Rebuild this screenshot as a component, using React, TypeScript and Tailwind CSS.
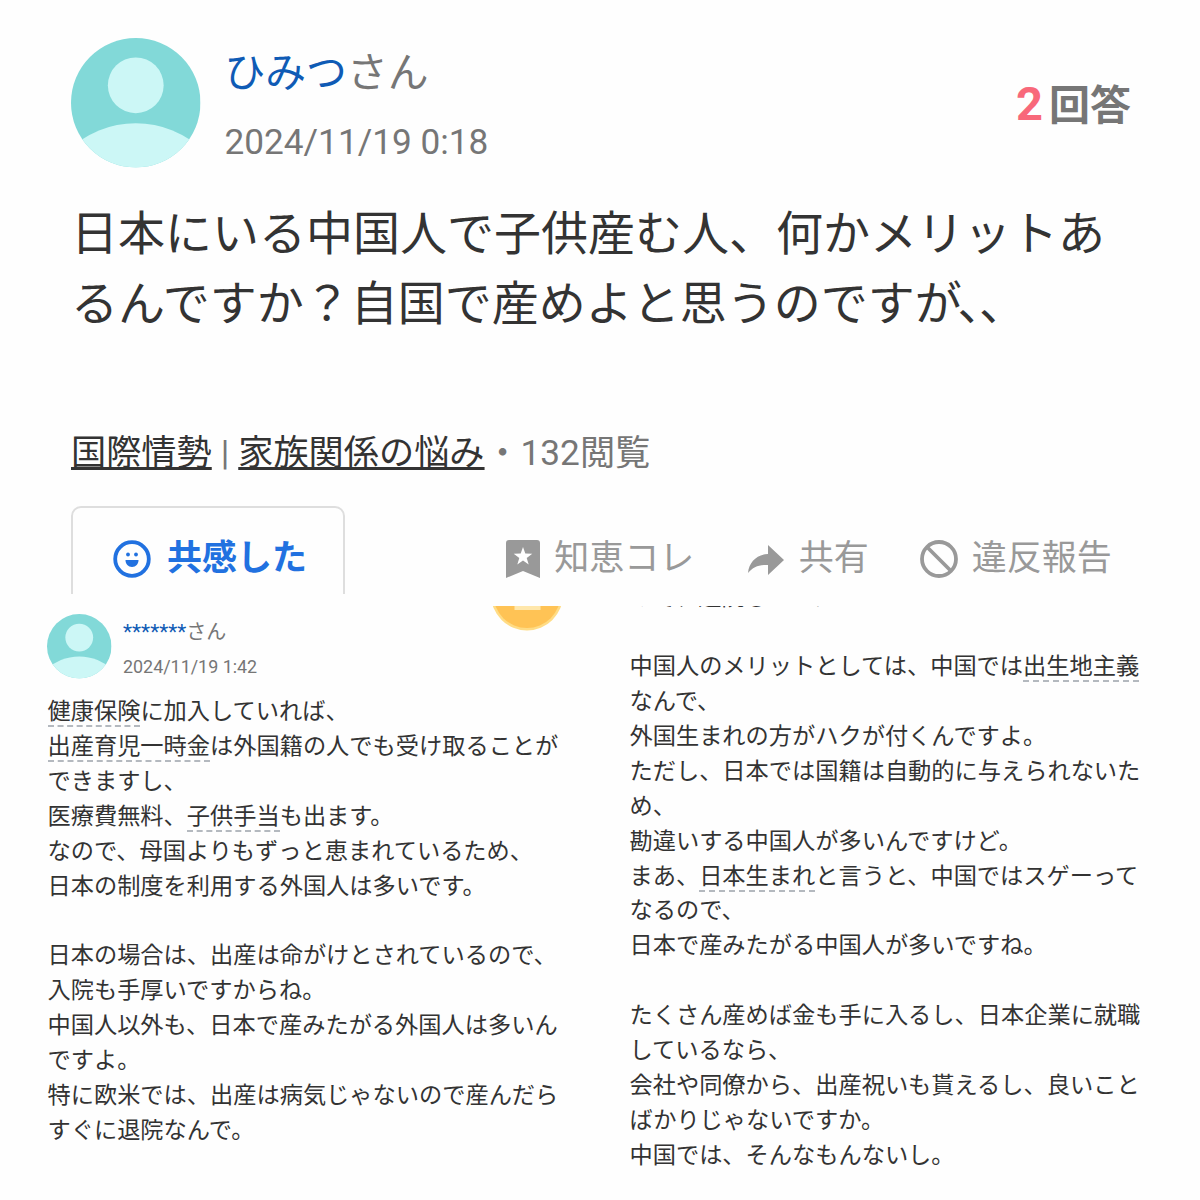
import clsx from "clsx";
import type { ReactNode } from "react";

function Avatar({ className }: { className: string }) {
  return (
    <svg viewBox="0 0 130 130" className={clsx("shrink-0", className)}>
      <defs>
        <clipPath id="avatar">
          <circle cx="65" cy="65" r="65" />
        </clipPath>
      </defs>
      <g clipPath="url(#avatar)">
        <rect width="130" height="130" fill="#82d9d8" />
        <circle cx="65" cy="47.5" r="28" fill="#ccf7f6" />
        <circle cx="65" cy="182" r="96.5" fill="#ccf7f6" />
      </g>
    </svg>
  );
}

function Term({ children }: { children: ReactNode }) {
  return <span className="border-b-2 border-dashed border-[#b4b9bf]">{children}</span>;
}

function Line({ children }: { children?: ReactNode }) {
  return <p className="h-[34.88px] whitespace-nowrap">{children}</p>;
}

export default function App() {
  return (
    <div className="w-[1200px] h-[1200px] overflow-hidden bg-[#fefefe] text-[#333] font-['Roboto','Noto_Sans_CJK_JP',sans-serif]">
      {/* Question */}
      <section className="h-[594px] overflow-hidden pl-[71px] pr-[69px] pt-[38px]">
        <header className="flex h-[130px]">
          <Avatar className="size-[129.5px]" />
          <div className="ml-[24px] grow">
            <div className="pt-[2px] text-[40.8px] leading-[66px] text-[#767676]">
              <a className="text-[#0f5bb5]">ひみつ</a>さん
            </div>
            <div className="mt-[3px] text-[35.2px] leading-[66px] text-[#767676]">2024/11/19 0:18</div>
          </div>
          <div className="flex items-baseline pt-[36px] font-bold leading-[60px]">
            <span className="text-[47px] text-[#f8687a]">2</span>
            <span className="ml-[6px] text-[41px] text-[#767676]">回答</span>
          </div>
        </header>

        <h1 className="mt-[31px] whitespace-nowrap text-[47px] font-normal leading-[70px]">
          <span className="block">日本にいる中国人で子供産む人、何かメリットあ</span>
          <span className="block">るんですか？自国で産めよと思うのですが<span className="-ml-[3px] tracking-[-2px]">､､</span></span>
        </h1>

        <div className="mt-[89px] flex h-[50px] items-center whitespace-nowrap text-[35.2px] leading-[50px] text-[#767676]">
          <a className="text-[#333] underline decoration-[3px] underline-offset-[2px] [text-decoration-skip-ink:none]">国際情勢</a>
          <span className="w-[26.5px] text-center">|</span>
          <a className="text-[#333] underline decoration-[3px] underline-offset-[2px] [text-decoration-skip-ink:none]">家族関係の悩み</a>
          <span className="w-[36px] text-center">・</span>
          <span>132閲覧</span>
        </div>

        <div className="mt-[28px] flex h-[100px] text-[35px] leading-[54px] text-[#999]">
          <button className="flex h-[120px] w-[274px] shrink-0 items-start rounded-t-[10px] border-2 border-[#dedede] pl-[40px] pt-[24px] font-bold text-[#2171e0]">
            <svg viewBox="0 0 38 38" className="mt-[8px] mr-[16px] size-[38px]">
              <circle cx="19" cy="19" r="16.8" fill="none" stroke="currentColor" strokeWidth="3.8" />
              <circle cx="15" cy="14.5" r="1.9" fill="currentColor" />
              <circle cx="23" cy="14.5" r="1.9" fill="currentColor" />
              <path d="M12.5 20h13c0 4-2.700 7-6.500 7s-6.500-3-6.500-7z" fill="currentColor" />
            </svg>
            共感した
          </button>
          <div className="flex items-start pl-[160.5px] pt-[26px] whitespace-nowrap">
            <svg viewBox="0 0 34 38" className="mt-[8px] h-[38px] w-[34px]">
              <path d="M3 0h28a3 3 0 0 1 3 3v35l-17-7-17 7V3a3 3 0 0 1 3-3z" fill="currentColor" />
              <path d="M17 7l2.300 6.600 7 .1-5.600 4.200 2 6.700-5.700-4-5.700 4 2-6.700-5.600-4.200 7-.1z" fill="#fff" />
            </svg>
            <span className="ml-[14.8px]">知恵コレ</span>
            <svg viewBox="0 0 36 30" className="mt-[13px] ml-[54px] h-[30px] w-[36px]">
              <path d="M20 0l16 15-16 15v-10C11 19.500 5 22 0 28 1 17 9 9.500 20 9z" fill="currentColor" />
            </svg>
            <span className="ml-[14.5px]">共有</span>
            <svg viewBox="0 0 38 38" className="mt-[8px] ml-[51px] size-[38px]">
              <circle cx="19" cy="19" r="17" fill="none" stroke="currentColor" strokeWidth="3.800" />
              <path d="M7 7l24 24" stroke="currentColor" strokeWidth="3.800" />
            </svg>
            <span className="ml-[14px]">違反報告</span>
          </div>
        </div>
      </section>

      {/* Answers */}
      <div className="mt-[12px] flex h-[594px] overflow-hidden text-[23.23px] leading-[34.88px]">
        <section className="w-[491px] shrink-0 pl-[47px] pt-[8px]">
          <header className="flex h-[65px]">
            <Avatar className="size-[64.5px]" />
            <div className="ml-[11.5px] text-[#767676]">
              <div className="pt-px text-[20px] leading-[34px]">
                <a className="text-[21px] text-[#0f5bb5]">*******</a>さん
              </div>
              <div className="mt-px text-[17.9px] leading-[34px]">2024/11/19 1:42</div>
            </div>
          </header>
          <div className="mt-[15.2px] ml-[0.5px]">
            <Line><Term>健康保険</Term>に加入していれば、</Line>
            <Line><Term>出産育児一時金</Term>は外国籍の人でも受け取ることが</Line>
            <Line>できますし、</Line>
            <Line>医療費無料、<Term>子供手当</Term>も出ます。</Line>
            <Line>なので、母国よりもずっと恵まれているため、</Line>
            <Line>日本の制度を利用する外国人は多いです。</Line>
            <Line />
            <Line>日本の場合は、出産は命がけとされているので、</Line>
            <Line>入院も手厚いですからね。</Line>
            <Line>中国人以外も、日本で産みたがる外国人は多いん</Line>
            <Line>ですよ。</Line>
            <Line>特に欧米では、出産は病気じゃないので産んだら</Line>
            <Line>すぐに退院なんで。</Line>
          </div>
        </section>

        {/* Bottom of the coin badge, cut by the panel edge */}
        <svg viewBox="0 0 76 30" className="h-[30px] w-[76px] shrink-0">
          <circle cx="36" cy="-11.500" r="36" fill="#ffdc85" />
          <circle cx="36" cy="-11.500" r="33.500" fill="#ffc355" />
          <rect x="23.500" y="0" width="26" height="4" fill="#ffe7ab" />
        </svg>

        <section className="pl-[62.5px]">
          <div className="-mt-[26.5px]">
            <Line>ので、通院していた</Line>
            <Line />
            <Line>中国人のメリットとしては、中国では<Term>出生地主義</Term></Line>
            <Line>なんで、</Line>
            <Line>外国生まれの方がハクが付くんですよ。</Line>
            <Line>ただし、日本では国籍は自動的に与えられないた</Line>
            <Line>め、</Line>
            <Line>勘違いする中国人が多いんですけど。</Line>
            <Line>まあ、<Term>日本生まれ</Term>と言うと、中国ではスゲーって</Line>
            <Line>なるので、</Line>
            <Line>日本で産みたがる中国人が多いですね。</Line>
            <Line />
            <Line>たくさん産めば金も手に入るし、日本企業に就職</Line>
            <Line>しているなら、</Line>
            <Line>会社や同僚から、出産祝いも貰えるし、良いこと</Line>
            <Line>ばかりじゃないですか。</Line>
            <Line>中国では、そんなもんないし。</Line>
          </div>
        </section>
      </div>
    </div>
  );
}
